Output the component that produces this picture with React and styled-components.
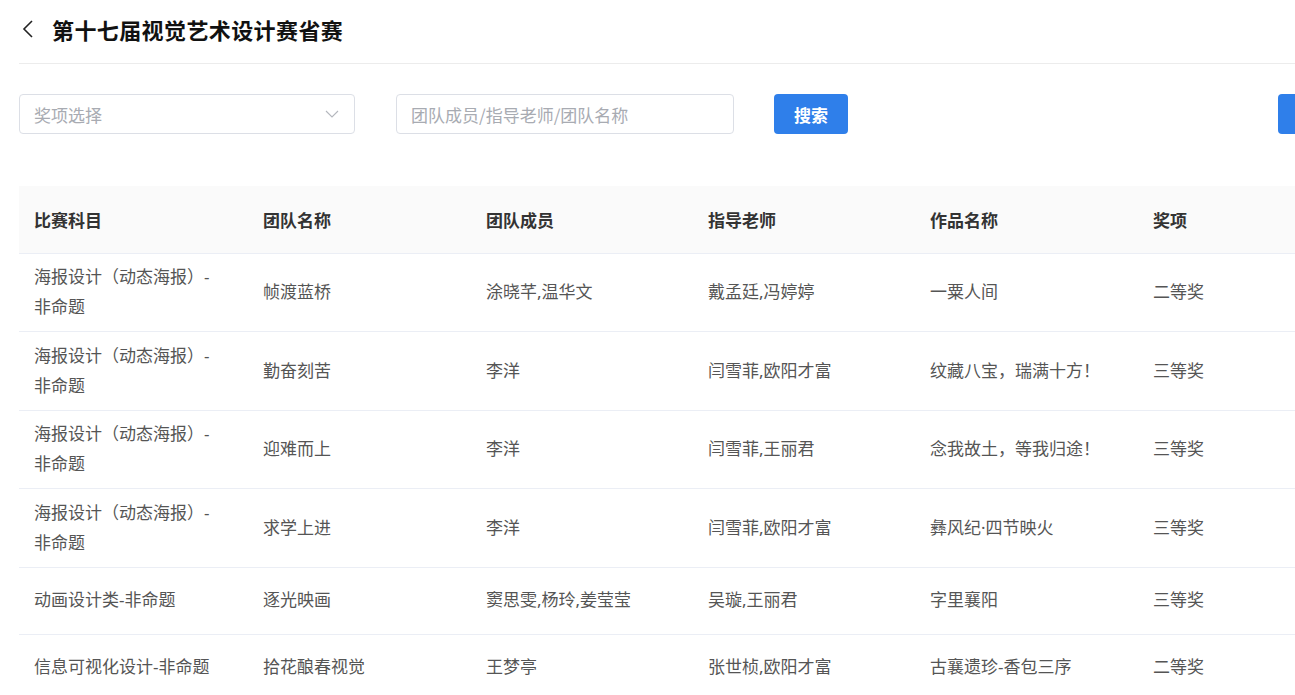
import React from "react";
import styled, { createGlobalStyle } from "styled-components";

const GlobalStyle = createGlobalStyle`
  html, body {
    margin: 0;
    padding: 0;
    background: #fff;
    overflow: hidden;
  }
  body {
    font-family: "Noto Sans CJK SC", "Noto Sans", "Liberation Sans", sans-serif;
  }
  * { box-sizing: border-box; }
`;

const rows = [
  ["海报设计（动态海报）-非命题", "帧渡蓝桥", "涂晓芊,温华文", "戴孟廷,冯婷婷", "一粟人间", "二等奖"],
  ["海报设计（动态海报）-非命题", "勤奋刻苦", "李洋", "闫雪菲,欧阳才富", "纹藏八宝，瑞满十方！", "三等奖"],
  ["海报设计（动态海报）-非命题", "迎难而上", "李洋", "闫雪菲,王丽君", "念我故土，等我归途！", "三等奖"],
  ["海报设计（动态海报）-非命题", "求学上进", "李洋", "闫雪菲,欧阳才富", "彝风纪·四节映火", "三等奖"],
  ["动画设计类-非命题", "逐光映画", "窦思雯,杨玲,姜莹莹", "吴璇,王丽君", "字里襄阳", "三等奖"],
  ["信息可视化设计-非命题", "拾花酿春视觉", "王梦亭", "张世桢,欧阳才富", "古襄遗珍-香包三序", "二等奖"],
];

const columns = ["比赛科目", "团队名称", "团队成员", "指导老师", "作品名称", "奖项"];
const widths = [229, 223, 222, 222, 223, 214];

const App = () => (
  <>
    <GlobalStyle />
    <Page>
      <Header>
        <BackButton>
          <svg width="14" height="20" viewBox="0 0 14 20" fill="none">
            <polyline points="11,2 3,10 11,18" stroke="#222" strokeWidth="1.6" />
          </svg>
        </BackButton>
        <Title>第十七届视觉艺术设计赛省赛</Title>
      </Header>

      <FilterRow>
        <Select>
          <Placeholder>奖项选择</Placeholder>
          <svg width="14" height="8" viewBox="0 0 14 8" fill="none">
            <polyline points="1,1 7,7 13,1" stroke="#b4b7bd" strokeWidth="1.1" />
          </svg>
        </Select>
        <Input placeholder="团队成员/指导老师/团队名称" />
        <PrimaryButton>搜索</PrimaryButton>
        <Spacer />
        <PrimaryButton aria-label="导出" />
      </FilterRow>

      <Table>
        <colgroup>
          {widths.map((w, i) => (
            <col key={i} style={{ width: w }} />
          ))}
        </colgroup>
        <thead>
          <tr>
            {columns.map((c) => (
              <Th key={c}>{c}</Th>
            ))}
          </tr>
        </thead>
        <tbody>
          {rows.map((r, i) => (
            <tr key={i}>
              {r.map((v, j) => (
                <Td key={j} $first={j === 0}>
                  {v}
                </Td>
              ))}
            </tr>
          ))}
        </tbody>
      </Table>
    </Page>
  </>
);

const Page = styled.div`
  width: 1333px;
  margin-left: 19px;
`;

const Header = styled.div`
  height: 64px;
  display: flex;
  align-items: center;
  border-bottom: 1px solid #ececec;
  padding-bottom: 6px;
`;

const BackButton = styled.div`
  width: 33px;
  display: flex;
  align-items: center;
  svg {
    display: block;
    margin-left: 2px;
  }
`;

const Title = styled.h1`
  margin: 0;
  font-size: 22px;
  font-weight: 700;
  color: #111;
  letter-spacing: 0.4px;
`;

const FilterRow = styled.div`
  display: flex;
  align-items: center;
  gap: 40px;
  margin-top: 30px;
  height: 40px;
`;

const Select = styled.div`
  width: 336px;
  height: 40px;
  margin-right: 1px;
  border: 1px solid #dcdfe6;
  border-radius: 4px;
  display: flex;
  align-items: center;
  justify-content: space-between;
  padding: 0 15px 0 14px;
`;

const Placeholder = styled.span`
  font-size: 17px;
  color: #a8abb2;
`;

const Input = styled.input`
  width: 338px;
  height: 40px;
  border: 1px solid #dcdfe6;
  border-radius: 4px;
  padding: 0 14px;
  font-size: 17px;
  font-family: inherit;
  outline: none;
  &::placeholder {
    color: #a8abb2;
  }
`;

const PrimaryButton = styled.button`
  width: 74px;
  height: 40px;
  border: none;
  border-radius: 4px;
  background: #2f7fea;
  color: #fff;
  font-family: inherit;
  font-size: 17px;
  font-weight: 600;
`;

const Spacer = styled.div`
  flex: 1;
  margin-left: -40px;
`;

const Table = styled.table`
  margin-top: 52px;
  width: 1333px;
  border-collapse: collapse;
  table-layout: fixed;
`;

const Th = styled.th`
  height: 67px;
  background: #fafafa;
  text-align: left;
  padding: 0 15px;
  font-size: 17px;
  font-weight: 600;
  color: #333;
  border-bottom: 1px solid #ebeef5;
`;

const Td = styled.td`
  height: 67px;
  padding: 8.5px 15px 9px;
  font-family: "Noto Sans", "Noto Sans CJK SC", sans-serif;
  font-size: 17px;
  line-height: 30px;
  color: #555;
  border-bottom: 1px solid #ebeef5;
  vertical-align: middle;
  ${(p) => p.$first && "padding-right: 25px;"}
`;

export default App;
